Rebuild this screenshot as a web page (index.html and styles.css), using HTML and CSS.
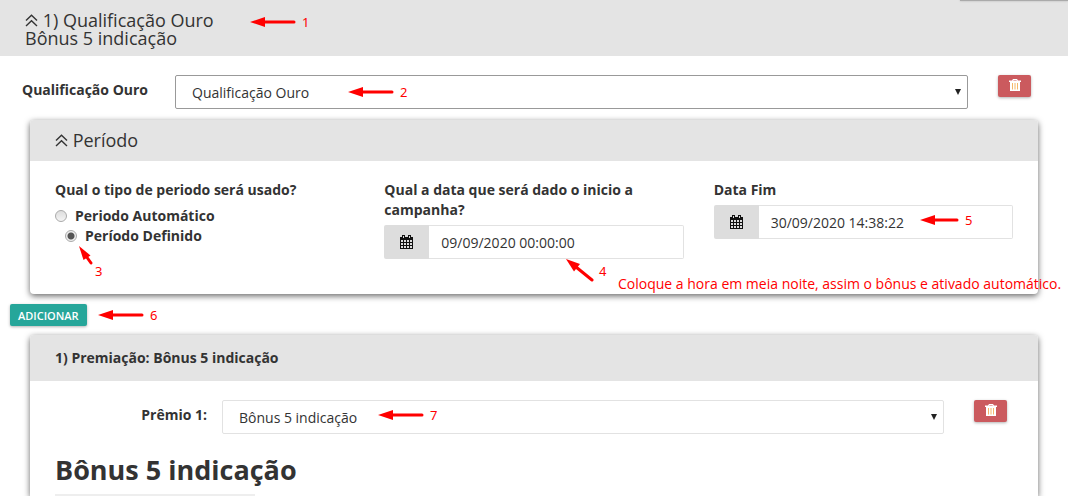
FILE: index.html
```html
<!DOCTYPE html>
<html lang="pt-BR">
<head>
    <meta charset="UTF-8">
    <meta name="viewport" content="width=device-width, initial-scale=1.0">
    <title>Qualificação Ouro</title>
    <link rel="stylesheet" href="styles.css">
</head>
<body>
    <svg class="sprite" aria-hidden="true">
        <symbol id="angle-up" viewBox="0 0 13 13">
            <path d="M1 6.5 6.5 1.2 12 6.5M1 12 6.5 6.7 12 12" fill="none" stroke="#333" stroke-width="1.4"/>
        </symbol>
        <symbol id="trash" viewBox="0 0 12 12">
            <path d="M4 0h4l1 1.5h3V3h-1v9H1V3H0V1.500h3zM4.600 1l-.4.6h3.600L7.400 1z" fill="#fff" fill-rule="evenodd"/>
            <path d="M3.500 4v6.500M6 4v6.500M8.500 4v6.500" stroke="#f5b869" stroke-width="1"/>
        </symbol>
        <symbol id="calendar" viewBox="0 0 13 14">
            <path d="M0 2h13v12H0z" fill="#111"/>
            <path d="M2 0h3v4H2zM8 0h3v4H8z" fill="#111"/>
            <path d="M1 5h2v2H1zM4 5h2v2H4zM7 5h2v2H7zM10 5h2v2h-2zM1 8h2v2H1zM4 8h2v2H4zM7 8h2v2H7zM10 8h2v2h-2zM1 11h2v2H1zM4 11h2v2H4zM7 11h2v2H7zM10 11h2v2h-2z" fill="#ddd"/>
            <path d="M3.500 1v2M9.500 1v2" stroke="#ddd" stroke-width="1"/>
        </symbol>
        <symbol id="arrow-left" viewBox="0 0 46 10">
            <path d="M0 5 15 0v10z" fill="#f00"/>
            <path d="M13 5h31" stroke="#f00" stroke-width="3" stroke-linecap="round"/>
        </symbol>
    </svg>

    <div class="page">
        <header class="page-heading">
            <div class="floating-box"></div>
            <h2 class="title"><svg class="angle"><use href="#angle-up"/></svg> 1) Qualificação Ouro<br>Bônus 5 indicação</h2>
        </header>

        <div class="form-row">
            <label class="row-label" for="qualificacao">Qualificação Ouro</label>
            <select class="form-control select select-dark" id="qualificacao">
                <option>Qualificação Ouro</option>
            </select>
            <button class="btn btn-danger" type="button" aria-label="Remover"><svg class="trash"><use href="#trash"/></svg></button>
        </div>

        <section class="panel">
            <div class="panel-heading">
                <h2 class="title"><svg class="angle"><use href="#angle-up"/></svg> Período</h2>
            </div>
            <div class="panel-body columns">
                <div class="radios">
                    <p class="field-label">Qual o tipo de periodo será usado?</p>
                    <label class="radio"><input type="radio" name="periodo"> Periodo Automático</label>
                    <label class="radio radio-indent"><input type="radio" name="periodo" checked> Período Definido</label>
                </div>
                <div>
                    <label class="field-label" for="inicio">Qual a data que será dado o inicio a campanha?</label>
                    <div class="input-group">
                        <span class="addon"><svg class="calendar"><use href="#calendar"/></svg></span>
                        <input class="form-control" type="text" id="inicio" value="09/09/2020 00:00:00">
                    </div>
                </div>
                <div>
                    <label class="field-label" for="fim">Data Fim</label>
                    <div class="input-group">
                        <span class="addon"><svg class="calendar"><use href="#calendar"/></svg></span>
                        <input class="form-control" type="text" id="fim" value="30/09/2020 14:38:22">
                    </div>
                </div>
            </div>
        </section>

        <button class="btn btn-add" type="button">ADICIONAR</button>

        <section class="panel panel-last">
            <div class="panel-heading panel-heading-tall">
                <h3 class="subtitle">1) Premiação: Bônus 5 indicação</h3>
            </div>
            <div class="form-row">
                <label class="row-label" for="premio">Prêmio 1:</label>
                <select class="form-control select" id="premio">
                    <option>Bônus 5 indicação</option>
                </select>
                <button class="btn btn-danger" type="button" aria-label="Remover"><svg class="trash"><use href="#trash"/></svg></button>
            </div>
            <div class="prize">
                <h1 class="prize-title">Bônus 5 indicação</h1>
                <div class="prize-bar"></div>
            </div>
        </section>

        <!-- step markers over the form -->
        <div class="note note-1"><svg class="arrow"><use href="#arrow-left"/></svg>1</div>
        <div class="note note-2"><svg class="arrow"><use href="#arrow-left"/></svg>2</div>
        <div class="note note-3">
            <svg class="arrow-diagonal" width="14" height="20" viewBox="0 0 14 20"><path d="M0 0 11.500 9.500 4.500 14z" fill="#f00"/><path d="M7 10l5 7" stroke="#f00" stroke-width="3" stroke-linecap="round"/></svg>3
        </div>
        <div class="note note-4">
            <svg class="arrow-diagonal" width="28" height="23" viewBox="0 0 28 23"><path d="M0 0 14 5 8 12.500z" fill="#f00"/><path d="M10 8l16 13" stroke="#f00" stroke-width="3" stroke-linecap="round"/></svg>4
        </div>
        <div class="note note-5"><svg class="arrow" width="39" height="10" viewBox="0 0 39 10"><path d="M0 5 15 0v10z" fill="#f00"/><path d="M13 5h24" stroke="#f00" stroke-width="3" stroke-linecap="round"/></svg>5</div>
        <div class="note note-6"><svg class="arrow"><use href="#arrow-left"/></svg>6</div>
        <div class="note note-7"><svg class="arrow"><use href="#arrow-left"/></svg>7</div>
        <div class="note note-text">Coloque a hora em meia noite, assim o bônus e ativado automático.</div>
    </div>
</body>
</html>
```
FILE: styles.css
```css
* {
    box-sizing: border-box;
}
body {
    margin: 0;
    font-family: 'Open Sans', 'Noto Sans', sans-serif;
    font-size: 14px;
    line-height: 20px;
    color: #333;
    background-color: #fff;
}
h1, h2, h3, p {
    margin: 0;
}
.sprite {
    display: none;
}
.page {
    position: relative;
}
.page-heading {
    padding: 11px 25px 9px;
    background-color: #e4e4e4;
}
.floating-box {
    position: absolute;
    top: 0;
    right: 0;
    width: 108px;
    height: 1px;
    background-color: #aaa;
    box-shadow: 0 0 2px rgba(0, 0, 0, 0.3);
}
.title {
    font-size: 18px;
    line-height: 18px;
    font-weight: 400;
}
.angle {
    width: 13px;
    height: 13px;
}
.form-row {
    display: flex;
    align-items: flex-start;
    padding: 19px 37px 11px 0;
}
.row-label {
    width: 175px;
    padding: 5px 27px 0 0;
    text-align: right;
    font-weight: bold;
}
.form-control {
    flex: 1;
    min-width: 0;
    height: 34px;
    padding: 0 12px;
    border: 1px solid #e2e2e2;
    border-radius: 2px;
    background-color: #fff;
    color: #333;
    font-family: inherit;
    font-size: 14px;
    font-weight: 400;
}
.select {
    appearance: none;
    padding: 0 16px;
    background-image: url("data:image/svg+xml,%3Csvg xmlns='http://www.w3.org/2000/svg' width='6' height='6'%3E%3Cpath d='M0 0h6L3 6z' fill='%23222'/%3E%3C/svg%3E");
    background-repeat: no-repeat;
    background-position: right 6px center;
}
.select-dark {
    border-color: #999;
}
.btn {
    height: 22px;
    border: none;
    border-radius: 2px;
    font-family: inherit;
    cursor: pointer;
    box-shadow: 0 1px 3px rgba(0, 0, 0, 0.3);
}
.btn-danger {
    width: 33px;
    margin-left: 30px;
    padding: 0;
    background-color: #cb5a5e;
}
.trash {
    display: block;
    width: 12px;
    height: 12px;
    margin: 0 auto 2px;
}
.btn-add {
    display: block;
    margin: 10px 0 9px 10px;
    padding: 0 8px;
    background-color: #26a69a;
    color: #fff;
    font-size: 11px;
    font-weight: 600;
}
.panel {
    margin: 0 30px;
    border-radius: 4px;
    background-color: #fff;
    box-shadow: 0 2px 6px rgba(0, 0, 0, 0.6);
}
.panel-heading {
    padding: 11px 25px 12px;
    border-radius: 4px 4px 0 0;
    background-color: #e4e4e4;
}
.panel-heading-tall {
    padding: 13px 25px;
}
.subtitle {
    font-size: 14px;
    line-height: 20px;
}
.columns {
    display: grid;
    grid-template-columns: repeat(3, 1fr);
    gap: 30px;
    padding: 19px 25px 35px;
}
.field-label {
    display: block;
    margin-bottom: 5px;
    font-weight: bold;
}
.radios .field-label {
    margin-bottom: 6px;
}
.radio {
    display: flex;
    align-items: center;
    gap: 8px;
    font-weight: bold;
}
.radio-indent {
    margin-left: 10px;
}
.radio input {
    appearance: none;
    width: 12px;
    height: 12px;
    margin: 0;
    border: 1px solid #aaa;
    border-radius: 50%;
    background: linear-gradient(#ddd, #f4f4f4);
}
.radio input:checked {
    background: radial-gradient(circle, #555 0 3px, #eee 4px);
}
.input-group {
    display: flex;
}
.input-group .form-control {
    border-left: none;
    border-radius: 0 2px 2px 0;
}
.addon {
    display: flex;
    align-items: center;
    justify-content: center;
    width: 45px;
    border-radius: 2px 0 0 2px;
    background-color: #ddd;
}
.calendar {
    width: 13px;
    height: 14px;
}
.panel-last {
    border-radius: 4px 4px 0 0;
}
.panel-last .form-row {
    padding-right: 31px;
}
.panel-last .row-label {
    width: 192px;
    padding-right: 15px;
}
.prize {
    padding: 5px 25px 0;
}
.prize-title {
    font-size: 27px;
    line-height: 40px;
}
.prize-bar {
    width: 200px;
    height: 2px;
    margin-top: 4px;
    background-color: #eee;
}
.note {
    position: absolute;
    display: flex;
    align-items: center;
    gap: 6px;
    color: #f00;
    font-family: 'Noto Sans', sans-serif;
    font-size: 13px;
    line-height: 18px;
}
.arrow {
    height: 10px;
}
.arrow:not([width]) {
    width: 46px;
}
.note-1 { left: 250px; top: 13px; }
.note-2 { left: 348px; top: 83px; }
.note-3 { left: 79px; top: 246px; }
.note-4 { left: 566px; top: 259px; }
.note-5 { left: 920px; top: 211px; }
.note-6 { left: 98px; top: 306px; }
.note-7 { left: 378px; top: 406px; }
.note-3 {
    align-items: flex-start;
    gap: 2px;
    line-height: 50px;
}
.note-4 {
    align-items: flex-start;
    gap: 5px;
    line-height: 24px;
}
.note-text {
    left: 618px;
    top: 275px;
    font-family: 'Open Sans', sans-serif;
    font-size: 14px;
    white-space: nowrap;
}
```
